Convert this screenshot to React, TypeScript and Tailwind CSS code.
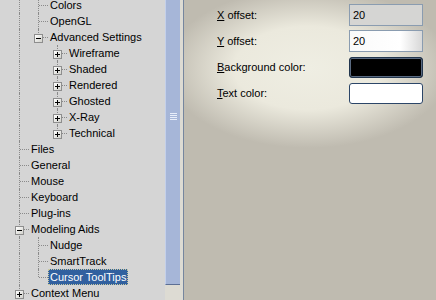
import React from 'react';

type Row = {
  label: string;
  level: 1 | 2 | 3;
  box?: '+' | '-';
  lines: { x: 19 | 38 | 57; half?: boolean }[];
  selected?: boolean;
};

const rows: Row[] = [
  { label: 'Colors', level: 2, lines: [{ x: 19 }, { x: 38 }] },
  { label: 'OpenGL', level: 2, lines: [{ x: 19 }, { x: 38 }] },
  { label: 'Advanced Settings', level: 2, box: '-', lines: [{ x: 19 }, { x: 38, half: true }] },
  { label: 'Wireframe', level: 3, box: '+', lines: [{ x: 19 }, { x: 57 }] },
  { label: 'Shaded', level: 3, box: '+', lines: [{ x: 19 }, { x: 57 }] },
  { label: 'Rendered', level: 3, box: '+', lines: [{ x: 19 }, { x: 57 }] },
  { label: 'Ghosted', level: 3, box: '+', lines: [{ x: 19 }, { x: 57 }] },
  { label: 'X-Ray', level: 3, box: '+', lines: [{ x: 19 }, { x: 57 }] },
  { label: 'Technical', level: 3, box: '+', lines: [{ x: 19 }, { x: 57, half: true }] },
  { label: 'Files', level: 1, lines: [{ x: 19 }] },
  { label: 'General', level: 1, lines: [{ x: 19 }] },
  { label: 'Mouse', level: 1, lines: [{ x: 19 }] },
  { label: 'Keyboard', level: 1, lines: [{ x: 19 }] },
  { label: 'Plug-ins', level: 1, lines: [{ x: 19 }] },
  { label: 'Modeling Aids', level: 1, box: '-', lines: [{ x: 19 }] },
  { label: 'Nudge', level: 2, lines: [{ x: 19 }, { x: 38 }] },
  { label: 'SmartTrack', level: 2, lines: [{ x: 19 }, { x: 38 }] },
  { label: 'Cursor ToolTips', level: 2, lines: [{ x: 19 }, { x: 38, half: true }], selected: true },
  { label: 'Context Menu', level: 1, box: '+', lines: [{ x: 19 }] },
];

const lineLeft = { 19: 'left-[19px]', 38: 'left-[38px]', 57: 'left-[57px]' };
const boxLeft = { 1: 'left-[15px]', 2: 'left-[34px]', 3: 'left-[53px]' };
const connLeft = { 1: 'left-[20px]', 2: 'left-[39px]', 3: 'left-[58px]' };
const labelPad = { 1: 'ml-[29px]', 2: 'ml-[48px]', 3: 'ml-[67px]' };

const Expander = ({ kind }: { kind: '+' | '-' }) => (
  <span className="absolute top-[5px] w-[9px] h-[9px] border border-[#8e8e8e] bg-gradient-to-br from-white to-[#d2d2cc]">
    <span className="absolute left-[1px] top-[3px] w-[5px] h-px bg-black" />
    {kind === '+' && <span className="absolute left-[3px] top-[1px] w-px h-[5px] bg-black" />}
  </span>
);

const TreeRow = ({ row }: { row: Row }) => (
  <div className="relative h-[16px] flex items-center">
    {row.lines.map((l) => (
      <span
        key={l.x}
        className={`absolute top-0 w-px border-l border-dotted border-[#8a8a8a] ${lineLeft[l.x]} ${l.half ? 'h-[8px]' : 'h-[16px]'}`}
      />
    ))}
    <span className={`absolute top-[8px] w-[9px] border-t border-dotted border-[#8a8a8a] ${connLeft[row.level]}`} />
    {row.box && (
      <span className={`absolute top-0 ${boxLeft[row.level]}`}>
        <Expander kind={row.box} />
      </span>
    )}
    <span
      className={`relative ${labelPad[row.level]} px-[2px] h-[16px] leading-[16px] text-[11px] whitespace-nowrap ${
        row.selected ? 'bg-[#31609f] text-white outline outline-1 outline-dotted outline-[#c9c9a0] -outline-offset-1' : 'text-black'
      }`}
    >
      {row.label}
    </span>
  </div>
);

const Field = ({ label, children }: { label: React.ReactNode; children: React.ReactNode }) => (
  <div className="flex items-center justify-between h-[22px]">
    <span className="text-[11px] text-black">{label}</span>
    {children}
  </div>
);

export default function App() {
  return (
    <div className="flex w-[436px] h-[300px] overflow-hidden font-['Liberation_Sans',Arial,sans-serif]">
      <div className="w-[165px] h-full bg-[#d5d5d5] overflow-hidden">
        <div className="-mt-[3px] flex flex-col">
          {rows.map((r) => (
            <TreeRow key={r.label} row={r} />
          ))}
        </div>
      </div>

      <div className="w-[18px] h-full bg-[#dddbd3] flex flex-col">
        <div className="relative w-[15px] h-[285px] bg-[#a6b6d8] border-l border-[#c4d0ea] border-b border-b-[#5d6f94] flex items-center justify-center">
          <div className="flex flex-col gap-px -mt-[52px]">
            <span className="w-[7px] h-px bg-[#e8eefa]" />
            <span className="w-[7px] h-px bg-[#e8eefa]" />
            <span className="w-[7px] h-px bg-[#e8eefa]" />
            <span className="w-[7px] h-px bg-[#e8eefa]" />
          </div>
        </div>
      </div>

      <div className="w-px h-full bg-[#76869e]" />

      <div className="flex-1 h-full bg-[radial-gradient(ellipse_142px_80px_at_124px_68px,#efeee3_0%,#ebe9dd_52%,#bfbbb0_100%)] pl-[33px] pr-[13px] pt-[4px] flex flex-col gap-[4px]">
        <Field label={<><span className="underline">X</span> offset:</>}>
          <div className="w-[74px] h-[22px] border border-[#8a9cb0] bg-[#d5d5d3] px-[3px] text-[11px] leading-[20px] text-black">20</div>
        </Field>
        <Field label={<><span className="underline">Y</span> offset:</>}>
          <div className="w-[74px] h-[22px] border border-[#8a9cb0] bg-gradient-to-r from-[#fafafa] via-white via-70% to-[#d8d8d8] px-[3px] text-[11px] leading-[20px] text-black">20</div>
        </Field>
        <Field label={<><span className="underline">B</span>ackground color:</>}>
          <div className="w-[74px] h-[21px] rounded-[3px] border border-[#22364e] bg-black shadow-[inset_0_0_0_1px_#5a6a80]" />
        </Field>
        <Field label={<><span className="underline">T</span>ext color:</>}>
          <div className="w-[74px] h-[21px] rounded-[3px] border border-[#2c4668] bg-white" />
        </Field>
      </div>
    </div>
  );
}
